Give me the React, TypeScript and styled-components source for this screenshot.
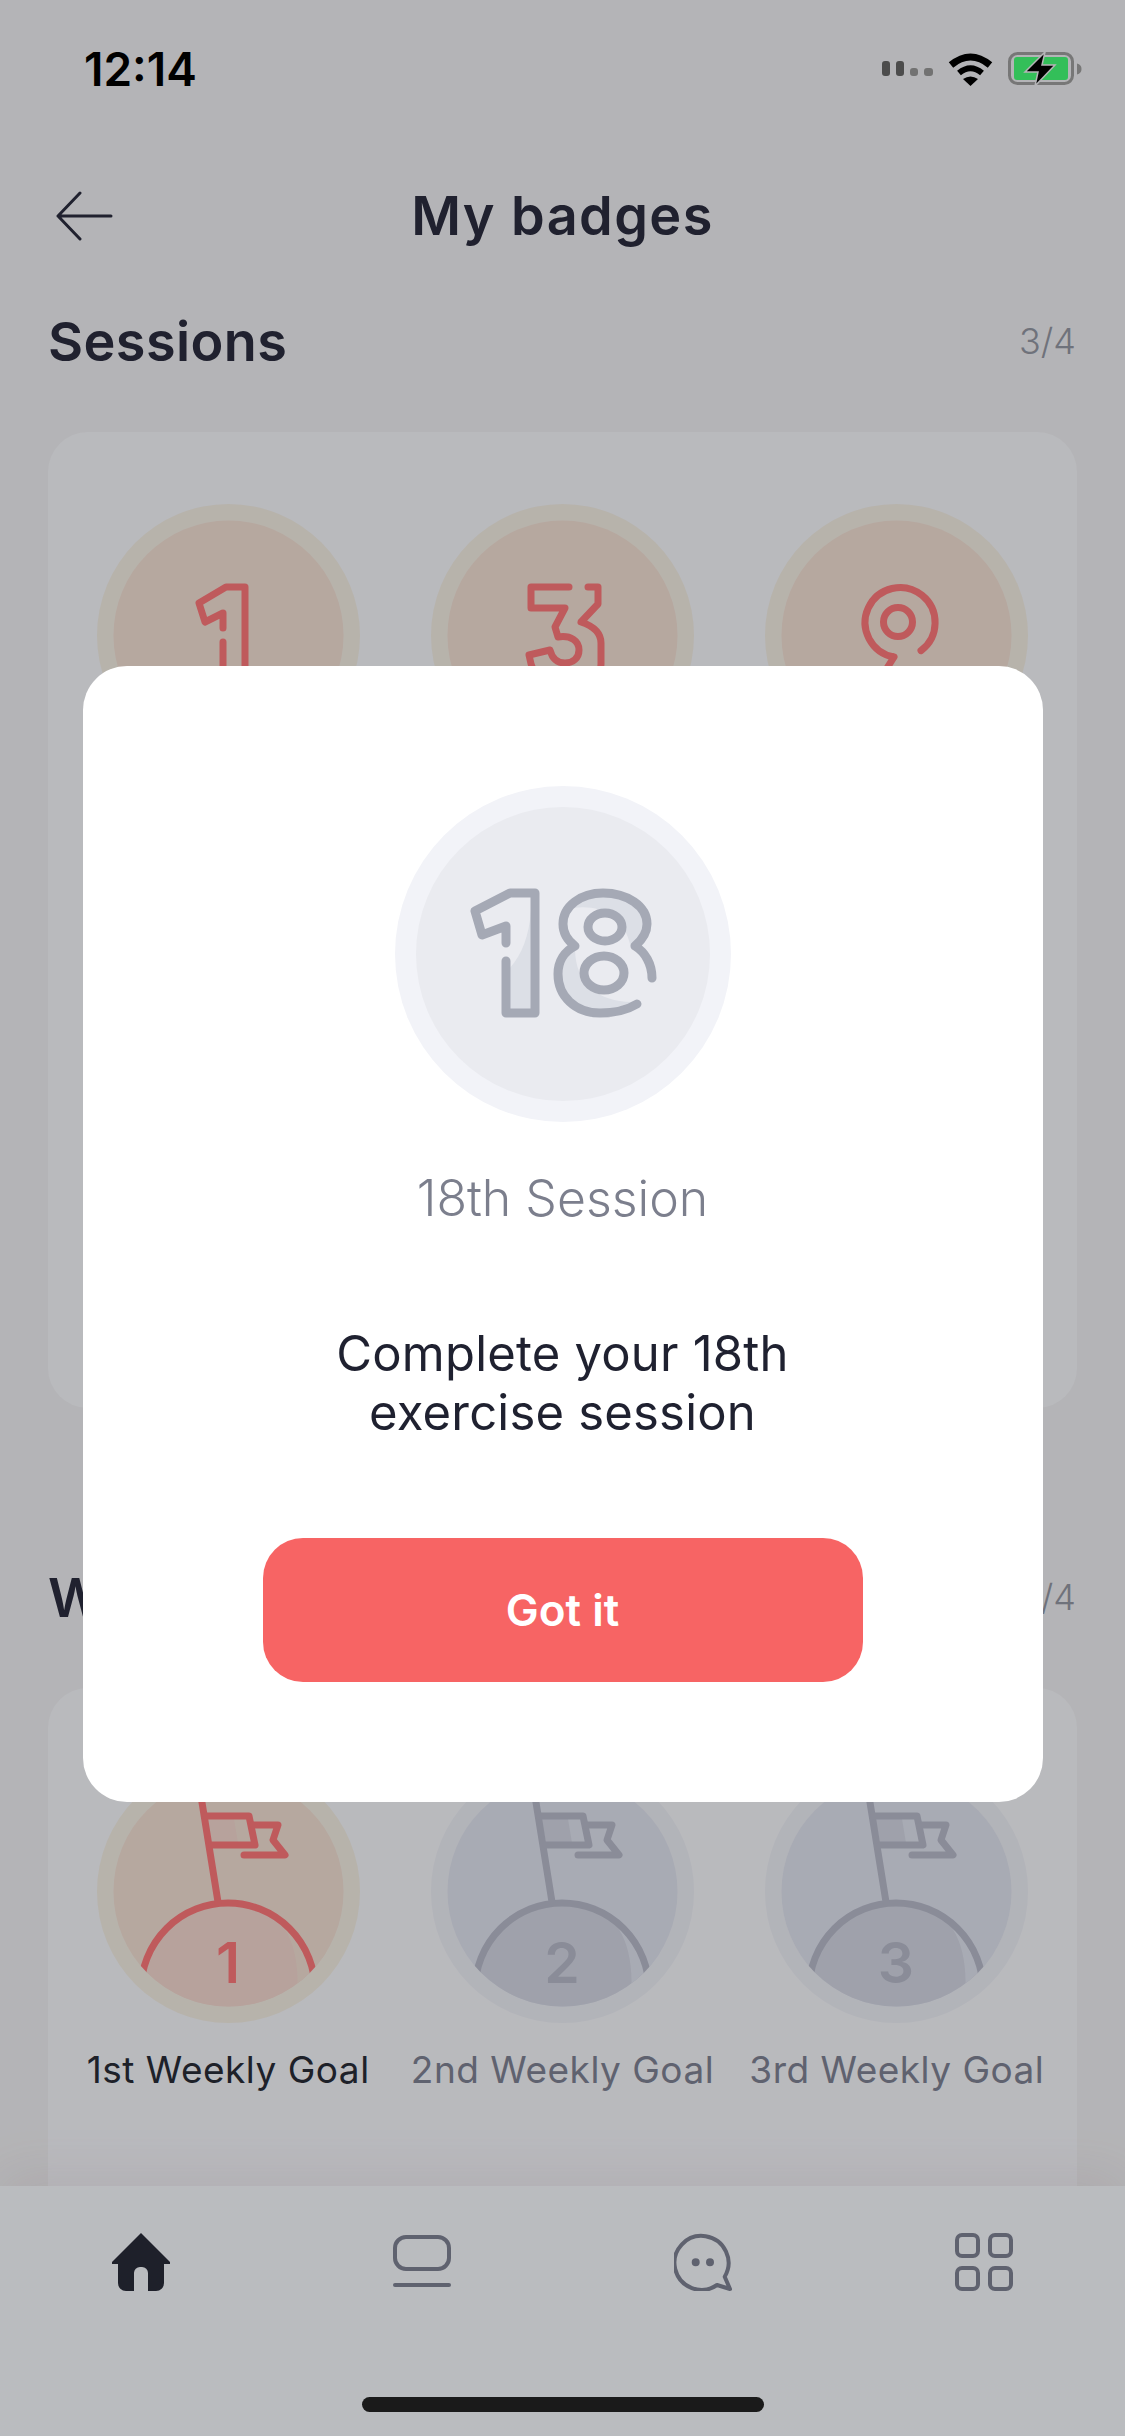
import React from "react";
import styled, { createGlobalStyle, css } from "styled-components";

const FONT = `Inter, "Liberation Sans", sans-serif`;

const Global = createGlobalStyle`
  html, body { margin: 0; padding: 0; background: #f1f1f4; }
  * { box-sizing: border-box; }
`;

const Page = styled.div`
  position: relative;
  width: 1125px;
  height: 2436px;
  overflow: hidden;
  display: flex;
  flex-direction: column;
  background: #f1f1f4;
  font-family: ${FONT};
  color: #2b2d3f;
`;

const StatusBar = styled.div`
  height: 138px;
  flex: none;
  display: flex;
  align-items: center;
  justify-content: space-between;
  padding: 0 43px 0 84px;
`;
const Time = styled.span`
  font-size: 46px;
  font-weight: 600;
  color: #000;
`;
const StatusIcons = styled.div`
  display: flex;
  align-items: center;
  gap: 15px;
`;

const Header = styled.header`
  height: 158px;
  flex: none;
  display: grid;
  grid-template-columns: 1fr auto 1fr;
  align-items: center;
  padding: 0 55px 2px;
`;
const BackIcon = styled.svg`
  width: 58px;
  height: 50px;
  display: block;
  fill: none;
  stroke: #2b2d3f;
  stroke-width: 3;
  stroke-linecap: round;
  stroke-linejoin: round;
`;
const Title = styled.h1`
  margin: 0;
  font-size: 54px;
  line-height: 60px;
  font-weight: 600;
  letter-spacing: 1.4px;
  color: #2b2d3f;
`;

const Main = styled.main`
  flex: 1;
  min-height: 0;
  overflow: hidden;
  padding: 0 48px;
`;
const Section = styled.section<{ $gap?: number }>`
  margin-top: ${(p) => p.$gap ?? 0}px;
`;
const SectionHead = styled.div`
  height: 90px;
  display: flex;
  align-items: center;
  justify-content: space-between;
  padding-right: 1px;
`;
const SectionTitle = styled.h2`
  margin: 0;
  font-size: 54px;
  font-weight: 600;
  letter-spacing: 0.4px;
  color: #2b2d3f;
`;
const Count = styled.span`
  font-size: 36px;
  font-weight: 300;
  color: #9598a5;
`;
const Card = styled.div<{ $height: number }>`
  margin-top: 46px;
  height: ${(p) => p.$height}px;
  border-radius: 40px;
  background: #f7f8fd;
  padding: 72px 13px 0;
`;
const BadgeRow = styled.div`
  display: grid;
  grid-template-columns: repeat(3, 1fr);
`;
const BadgeCell = styled.div`
  display: flex;
  flex-direction: column;
  align-items: center;
`;
const Medal = styled.svg<{ $size: number }>`
  width: ${(p) => p.$size}px;
  height: ${(p) => p.$size}px;
  display: block;
  flex: none;
`;
const Line = styled.path<{ $c: string; $w: number }>`
  fill: none;
  stroke: ${(p) => p.$c};
  stroke-width: ${(p) => p.$w};
  stroke-linecap: round;
  stroke-linejoin: round;
`;
const BadgeNumber = styled.text<{ $c: string }>`
  font-family: ${FONT};
  font-size: 57px;
  font-weight: 600;
  text-anchor: middle;
  fill: ${(p) => p.$c};
`;
const BadgeLabel = styled.span<{ $on: boolean }>`
  margin-top: 25px;
  font-size: 37px;
  line-height: 44px;
  letter-spacing: 0.5px;
  white-space: nowrap;
  font-weight: 400;
  color: ${(p) => (p.$on ? "#292c37" : "#7f8395")};
`;

const Nav = styled.nav`
  position: relative;
  flex: none;
  height: 250px;
  background: #f9fbff;
  box-shadow: 0 -10px 50px rgba(150, 100, 110, 0.1);
  display: flex;
  flex-direction: column;
  padding-top: 47px;
`;
const NavRow = styled.div`
  display: grid;
  grid-template-columns: repeat(4, 1fr);
  justify-items: center;
`;
const NavIcon = styled.svg<{ $active?: boolean }>`
  width: 58px;
  height: 58px;
  display: block;
  ${(p) =>
    p.$active
      ? css`
          fill: #282b39;
        `
      : css`
          fill: none;
          stroke: #7f8395;
          stroke-width: 4;
          stroke-linecap: round;
          stroke-linejoin: round;
        `}
`;
const HomeIndicator = styled.div`
  width: 402px;
  height: 15px;
  margin: 106px auto 0;
  border-radius: 8px;
  background: #232323;
`;

const Scrim = styled.div`
  position: absolute;
  inset: 0;
  padding-top: 31px;
  background: rgba(0, 0, 0, 0.25);
  display: flex;
  align-items: center;
  justify-content: center;
`;
const Modal = styled.div`
  width: 960px;
  background: #fff;
  border-radius: 44px;
  padding: 120px 0 120px;
  display: flex;
  flex-direction: column;
  align-items: center;
`;
const ModalName = styled.div`
  margin-top: 46px;
  font-size: 50px;
  line-height: 60px;
  font-weight: 300;
  color: #7c7f8d;
`;
const ModalText = styled.p`
  margin: 96px 0 0;
  font-size: 49px;
  line-height: 59px;
  letter-spacing: 0.2px;
  font-weight: 400;
  text-align: center;
  color: #1f2130;
`;
const GotIt = styled.button`
  margin-top: 96px;
  width: 600px;
  height: 144px;
  border: 0;
  border-radius: 40px;
  background: #f76464;
  color: #fff;
  font-family: ${FONT};
  font-size: 44px;
  font-weight: 600;
`;

const RED = "#ff787b";
const GREY = "#b8bbcb";

const DIGITS: Record<string, string> = {
  "1": "M126 124V109L108 118L102 99L129 83H148V195H126V138",
  "3": "M138 83H100V104H134L124 123L127 133C140 131 148 137 148 146C148 154 142 159 134 159C126 159 121 154 119 146L98 151C102 175 118 195 138 195C158 195 170 180 170 160V139C170 129 162 122 150 118L167 100V83H157",
  "9": "M129 153A35 35 0 1 1 156 146.6M129 153L112 180",
};

function SessionMedal({ digit }: { digit: string }) {
  return (
    <Medal $size={263} viewBox="0 0 263 263">
      <circle cx="131.5" cy="131.5" r="131.5" fill="#f5efe5" />
      <circle cx="131.5" cy="131.5" r="115" fill="#f3e0d5" />
      <Line $c={RED} $w={7} d={DIGITS[digit]} />
      {digit === "9" && <circle cx="133" cy="118" r="14.5" fill="none" stroke={RED} strokeWidth="7" />}
    </Medal>
  );
}

function GoalMedal({ n, on }: { n: number; on: boolean }) {
  const stroke = on ? RED : GREY;
  const id = `goal-clip-${n}`;
  return (
    <Medal $size={263} viewBox="0 0 263 263">
      <defs>
        <clipPath id={id}>
          <circle cx="131.5" cy="131.5" r="115" />
        </clipPath>
      </defs>
      <circle cx="131.5" cy="131.5" r="131.5" fill={on ? "#f5efe5" : "#eef0f7"} />
      <circle cx="131.5" cy="131.5" r="115" fill={on ? "#f3e0d5" : "#e1e4f1"} />
      <g clipPath={`url(#${id})`}>
        <circle cx="131" cy="230" r="87" fill={on ? "#f4d8d0" : "#d4d7e4"} />
        <path d="M165 150C190 160 204 190 200 240L240 240L225 170Z" fill={on ? "#f3e0d5" : "#e1e4f1"} />
        <circle cx="131" cy="230" r="87" fill="none" stroke={stroke} strokeWidth="7" />
      </g>
      <path d="M110 59H137L141 83H115Z" fill={on ? "#f4d8d0" : "#d4d7e4"} />
      <Line $c={stroke} $w={7} d="M103 30L121 142" />
      <Line $c={stroke} $w={7} d="M109 56H152L158 85H115" />
      <Line $c={stroke} $w={7} d="M156 65H181L176 80L188 95H147" />
      <BadgeNumber $c={stroke} x="131" y="223">
        {n}
      </BadgeNumber>
    </Medal>
  );
}

function ModalMedal() {
  const c = "#a5a9b5";
  const shade = "#dcdfe6";
  return (
    <Medal $size={336} viewBox="0 0 336 336">
      <circle cx="168" cy="168" r="168" fill="#f2f3f8" />
      <circle cx="168" cy="168" r="147" fill="#eaebf0" />
      <path d="M136 125C134 150 127 168 115 182V223H136Z" fill={shade} />
      <path d="M178 122C205 118 230 130 236 162C245 152 248 145 248 138C248 122 230 111 208 111C195 111 185 115 178 122Z" fill={shade} />
      <path d="M180 162C168 170 167 180 167 188C167 208 183 223 205 223C218 223 228 220 236 216C205 215 180 200 180 162Z" fill={shade} />
      <Line $c={c} $w={9} d="M111 157V140L87 149L80 125L115 107H140V227H111V175" />
      <Line
        $c={c}
        $w={9}
        d="M242 218C232 224 220 227 205 227C180 227 163 210 163 188C163 175 170 165 180 160C172 154 168 146 168 138C168 120 186 107 208 107C232 107 252 120 252 138C252 147 247 154 240 160C250 166 257 178 257 192"
      />
      <ellipse cx="210" cy="141" rx="17" ry="14" fill="none" stroke={c} strokeWidth="9" />
      <ellipse cx="209" cy="187" rx="20" ry="17" fill="none" stroke={c} strokeWidth="9" />
    </Medal>
  );
}

export default function App() {
  return (
    <Page>
      <Global />
      <StatusBar>
        <Time>12:14</Time>
        <StatusIcons>
          <svg width="51" height="16" viewBox="0 0 51 16">
            <rect x="0" y="0" width="8" height="15" rx="3" fill="#666" />
            <rect x="14" y="0" width="8" height="15" rx="3" fill="#666" />
            <rect x="28" y="7" width="8" height="8" rx="3" fill="#999" />
            <rect x="42" y="7" width="9" height="8" rx="3" fill="#999" />
          </svg>
          <svg width="45" height="33" viewBox="0 0 45 33">
            <path d="M3 12Q22.5 -4 42 12" fill="none" stroke="#000" strokeWidth="7" />
            <path d="M11 20Q22.5 10.5 34 20" fill="none" stroke="#000" strokeWidth="6" />
            <path d="M15 26L22.5 33L30 26Q22.5 21 15 26Z" fill="#000" />
          </svg>
          <svg width="74" height="34" viewBox="0 0 74 34">
            <rect x="1.5" y="1.5" width="63" height="30" rx="8" fill="none" stroke="#9f9f9f" strokeWidth="3" />
            <rect x="6" y="5" width="54" height="23" rx="3" fill="#44ff77" />
            <path d="M69 11.5C72 12.5 73.5 14 73.5 17C73.5 20 72 21.5 69 22.5Z" fill="#9f9f9f" />
            <path d="M37 0L17 20H30L27 34L47 13H34Z" fill="#000" stroke="#f1f1f4" strokeWidth="1.5" />
          </svg>
        </StatusIcons>
      </StatusBar>

      <Header>
        <BackIcon viewBox="0 0 58 50">
          <path d="M56 25H3M25 2L3 25L25 48" />
        </BackIcon>
        <Title>My badges</Title>
      </Header>

      <Main>
        <Section>
          <SectionHead>
            <SectionTitle>Sessions</SectionTitle>
            <Count>3/4</Count>
          </SectionHead>
          <Card $height={976}>
            <BadgeRow>
              {["1", "3", "9"].map((d) => (
                <BadgeCell key={d}>
                  <SessionMedal digit={d} />
                </BadgeCell>
              ))}
            </BadgeRow>
          </Card>
        </Section>
        <Section $gap={144}>
          <SectionHead>
            <SectionTitle>Weekly Goals</SectionTitle>
            <Count>1/4</Count>
          </SectionHead>
          <Card $height={900}>
            <BadgeRow>
              {["1st", "2nd", "3rd"].map((label, i) => (
                <BadgeCell key={label}>
                  <GoalMedal n={i + 1} on={i === 0} />
                  <BadgeLabel $on={i === 0}>{label} Weekly Goal</BadgeLabel>
                </BadgeCell>
              ))}
            </BadgeRow>
          </Card>
        </Section>
      </Main>

      <Nav>
        <NavRow>
          <NavIcon $active viewBox="0 0 58 58">
            <path d="M29 0L58 29V31H52V50A8 8 0 0 1 44 58H36V40A6 6 0 0 0 30 34H28A6 6 0 0 0 22 40V58H14A8 8 0 0 1 6 50V31H0V29Z" />
          </NavIcon>
          <NavIcon viewBox="0 0 58 58">
            <rect x="2" y="4" width="54" height="32" rx="11" />
            <path d="M2 52H56" />
          </NavIcon>
          <NavIcon viewBox="0 0 58 58">
            <path d="M43 52A27 27 0 1 1 50.7 43.7L56 56Z" />
            <circle cx="21.7" cy="29.3" r="2" />
            <circle cx="36" cy="29.3" r="2" />
          </NavIcon>
          <NavIcon viewBox="0 0 58 58">
            <rect x="2" y="2" width="21" height="21" rx="5" />
            <rect x="35" y="2" width="21" height="21" rx="5" />
            <rect x="2" y="35" width="21" height="21" rx="5" />
            <rect x="35" y="35" width="21" height="21" rx="5" />
          </NavIcon>
        </NavRow>
        <HomeIndicator />
      </Nav>

      <Scrim>
        <Modal>
          <ModalMedal />
          <ModalName>18th Session</ModalName>
          <ModalText>
            Complete your 18th
            <br />
            exercise session
          </ModalText>
          <GotIt>Got it</GotIt>
        </Modal>
      </Scrim>
    </Page>
  );
}
